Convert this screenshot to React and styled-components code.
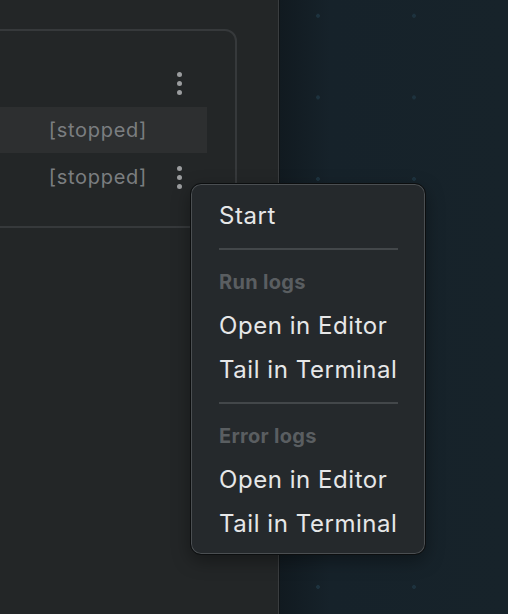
import React from "react";
import styled, { createGlobalStyle } from "styled-components";

const GlobalStyle = createGlobalStyle`
  html, body {
    margin: 0;
    padding: 0;
    background: #232627;
  }
  body {
    font-family: Inter, "Noto Sans", sans-serif;
    -webkit-font-smoothing: antialiased;
  }
`;

const Screen = styled.div`
  position: relative;
  display: flex;
  width: 508px;
  height: 614px;
  overflow: hidden;
`;

const Sidebar = styled.div`
  width: 279px;
  flex-shrink: 0;
  background: #232627;
  border-right: 1px solid #3a3d3f;
  box-shadow: 1px 0 0 #0f1417;
  padding-top: 29px;
  box-sizing: border-box;
`;

const Card = styled.div`
  margin-left: -14px;
  width: 251px;
  height: 199px;
  box-sizing: border-box;
  border: 2px solid #36393b;
  border-radius: 12px;
  padding: 29px 0 0 0;
  display: flex;
  flex-direction: column;
  gap: 1px;
`;

const Row = styled.div`
  height: 46px;
  margin-right: 28px;
  padding-right: 18px;
  display: flex;
  align-items: center;
  justify-content: flex-end;
  gap: 22px;
  background: ${(p) => (p.$active ? "#2d2f30" : "transparent")};
`;

const Status = styled.span`
  font-size: 20px;
  letter-spacing: 0.7px;
  color: #7b7e80;
`;

const Kebab = styled.div`
  width: 20px;
  display: flex;
  flex-direction: column;
  align-items: center;
  gap: 4px;
  visibility: ${(p) => (p.$hidden ? "hidden" : "visible")};

  span {
    width: 5px;
    height: 5px;
    border-radius: 50%;
    background: #9b9d9f;
  }
`;

const Canvas = styled.div`
  flex: 1;
  margin-left: 1px;
  background-color: #17232a;
  background-image: radial-gradient(circle, #1d323e 1.6px, transparent 2.2px),
    linear-gradient(90deg, #111a20 0px, #16222a 50px, #17232a 100%);
  background-size: 96px 81.6px, 100% 100%;
  background-position: -10px -25px, 0 0;
`;

const Menu = styled.div`
  position: absolute;
  left: 190px;
  top: 183px;
  width: 236px;
  box-sizing: border-box;
  padding: 10px 0 8px;
  background: #25292c;
  border: 1px solid #0c0e0f;
  border-radius: 11px;
  box-shadow: inset 0 0 0 1px #4b4f52, 0 6px 18px rgba(0, 0, 0, 0.35);
`;

const Item = styled.div`
  height: 44px;
  line-height: 44px;
  padding-left: 28px;
  color: ${(p) => (p.$header ? "#5a5e61" : "#e6e7e8")};
  font-weight: ${(p) => (p.$header ? 700 : 400)};
  font-size: ${(p) => (p.$header ? "20px" : "24px")};
  letter-spacing: ${(p) => (p.$header ? "0.3px" : "0.55px")};
  white-space: nowrap;
`;

const Divider = styled.div`
  height: 1.5px;
  margin: 10px 27px 10.5px 28px;
  background: #43474a;
`;

const Dots = ({ hidden }) => (
  <Kebab $hidden={hidden}>
    <span />
    <span />
    <span />
  </Kebab>
);

export default function App() {
  return (
    <>
      <GlobalStyle />
      <Screen>
        <Sidebar>
          <Card>
            <Row>
              <Dots />
            </Row>
            <Row $active>
              <Status>[stopped]</Status>
              <Dots hidden />
            </Row>
            <Row>
              <Status>[stopped]</Status>
              <Dots />
            </Row>
          </Card>
        </Sidebar>
        <Canvas />
        <Menu>
          <Item>Start</Item>
          <Divider />
          <Item $header>Run logs</Item>
          <Item>Open in Editor</Item>
          <Item>Tail in Terminal</Item>
          <Divider />
          <Item $header>Error logs</Item>
          <Item>Open in Editor</Item>
          <Item>Tail in Terminal</Item>
        </Menu>
      </Screen>
    </>
  );
}
